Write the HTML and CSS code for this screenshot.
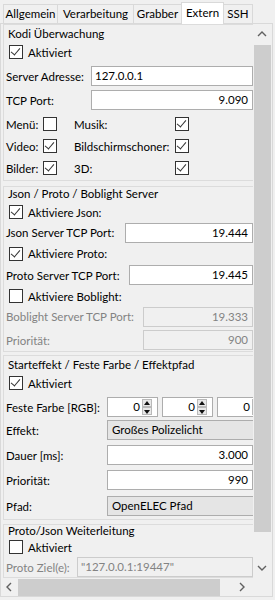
FILE: index.html
```html
<!DOCTYPE html>
<html lang="de">
<head>
    <meta charset="UTF-8">
    <title>Extern</title>
    <link rel="stylesheet" href="styles.css">
</head>
<body>
    <div class="window">
        <div class="tabs">
            <div class="tab t1">Allgemein</div>
            <div class="tab t2">Verarbeitung</div>
            <div class="tab t3">Grabber</div>
            <div class="tab t4 active">Extern</div>
            <div class="tab t5">SSH</div>
        </div>

        <div class="pane">
            <div class="viewport">
                <div class="content">

                    <!-- Kodi -->
                    <div class="group g-kodi">
                        <div class="title">Kodi Überwachung</div>
                        <div class="row check-row h20">
                            <span class="cb checked"></span><span>Aktiviert</span>
                        </div>
                        <div class="row field-row h24 mt2">
                            <label class="lbl w-kodi">Server Adresse:</label>
                            <div class="input left">127.0.0.1</div>
                        </div>
                        <div class="row field-row h24">
                            <label class="lbl w-kodi">TCP Port:</label>
                            <div class="input">9.090</div>
                        </div>
                        <div class="flags mt1">
                            <span>Menü:</span><span class="cb"></span><span>Musik:</span><span class="cb checked"></span>
                            <span>Video:</span><span class="cb checked"></span><span>Bildschirmschoner:</span><span class="cb checked"></span>
                            <span>Bilder:</span><span class="cb checked"></span><span>3D:</span><span class="cb checked"></span>
                        </div>
                    </div>

                    <!-- Json / Proto / Boblight -->
                    <div class="group g-json">
                        <div class="title t-json">Json / Proto / Boblight Server</div>
                        <div class="row check-row h20">
                            <span class="cb checked"></span><span>Aktiviere Json:</span>
                        </div>
                        <div class="row field-row h21">
                            <label class="lbl w-json">Json Server TCP Port:</label>
                            <div class="input">19.444</div>
                        </div>
                        <div class="row check-row h21">
                            <span class="cb checked"></span><span>Aktiviere Proto:</span>
                        </div>
                        <div class="row field-row h22">
                            <label class="lbl w-proto">Proto Server TCP Port:</label>
                            <div class="input">19.445</div>
                        </div>
                        <div class="row check-row h20">
                            <span class="cb"></span><span>Aktiviere Boblight:</span>
                        </div>
                        <div class="row field-row h21">
                            <label class="lbl w-bob disabled">Boblight Server TCP Port:</label>
                            <div class="input off">19.333</div>
                        </div>
                        <div class="row field-row h22 mt2">
                            <label class="lbl w-bob disabled">Priorität:</label>
                            <div class="input off">900</div>
                        </div>
                    </div>

                    <!-- Starteffekt -->
                    <div class="group g-start">
                        <div class="title">Starteffekt / Feste Farbe / Effektpfad</div>
                        <div class="row check-row h20">
                            <span class="cb checked"></span><span>Aktiviert</span>
                        </div>
                        <div class="row field-row h22 mt3">
                            <label class="lbl w-start">Feste Farbe [RGB]:</label>
                            <div class="spins">
                                <div class="spin"><span class="val">0</span><span class="arrows"><i class="up"></i><i class="down"></i></span></div>
                                <div class="spin"><span class="val">0</span><span class="arrows"><i class="up"></i><i class="down"></i></span></div>
                                <div class="spin"><span class="val">0</span><span class="arrows"><i class="up"></i><i class="down"></i></span></div>
                            </div>
                        </div>
                        <div class="row field-row h22 mt1">
                            <label class="lbl w-start">Effekt:</label>
                            <div class="combo">Großes Polizelicht</div>
                        </div>
                        <div class="row field-row h22 mt3">
                            <label class="lbl w-start">Dauer [ms]:</label>
                            <div class="input">3.000</div>
                        </div>
                        <div class="row field-row h22 mt3">
                            <label class="lbl w-start">Priorität:</label>
                            <div class="input">990</div>
                        </div>
                        <div class="row field-row h22 mt4">
                            <label class="lbl w-start">Pfad:</label>
                            <div class="combo">OpenELEC Pfad</div>
                        </div>
                    </div>

                    <!-- Weiterleitung -->
                    <div class="group g-fwd">
                        <div class="title t-fwd">Proto/Json Weiterleitung</div>
                        <div class="row check-row h20">
                            <span class="cb"></span><span>Aktiviert</span>
                        </div>
                        <div class="row field-row h20">
                            <label class="lbl w-fwd disabled">Proto Ziel(e):</label>
                            <div class="input left off">"127.0.0.1:19447"</div>
                        </div>
                    </div>

                </div>
            </div>

            <div class="vbar">
                <svg class="arrow" width="10" height="6" viewBox="0 0 10 6"><polyline points="1,5 5,1 9,5" /></svg>
                <div class="vthumb"></div>
                <svg class="arrow down" width="10" height="6" viewBox="0 0 10 6"><polyline points="1,1 5,5 9,1" /></svg>
            </div>

            <div class="hbar">
                <svg class="harrow" width="6" height="10" viewBox="0 0 6 10"><polyline points="5,1 1,5 5,9" /></svg>
                <div class="hthumb"></div>
                <svg class="harrow right" width="6" height="10" viewBox="0 0 6 10"><polyline points="1,1 5,5 1,9" /></svg>
            </div>

            <div class="corner"></div>
        </div>
    </div>
</body>
</html>
```

FILE: styles.css
```css
body {
    margin: 0;
    background-color: #f0f0f0;
    font-family: Lato, "Noto Sans", sans-serif;
    font-size: 11.5px;
    color: #000;
}
.window {
    width: 275px;
    height: 600px;
    overflow: hidden;
    white-space: nowrap;
}

/* tab bar */
.tabs {
    display: flex;
    align-items: flex-end;
    height: 23px;
    padding-left: 3px;
}
.tab {
    box-sizing: border-box;
    height: 19px;
    line-height: 17px;
    text-align: center;
    border: 1px solid #d9d9d9;
    border-bottom: none;
    margin-right: -1px;
    background-color: #f0f0f0;
}
.t1 { width: 55px; }
.t2 { width: 77px; }
.t3 { width: 49px; }
.t4 { width: 43px; }
.t5 { width: 30px; }
.tab.active {
    height: 22px;
    line-height: 19px;
    background-color: #fff;
    position: relative;
    z-index: 1;
    margin-bottom: -1px;
}

/* tab pane with scroll area */
.pane {
    width: 271px;
    height: 572px;
    border: 1px solid #d9d9d9;
    display: grid;
    grid-template-columns: 252px 18px;
    grid-template-rows: 554px 18px;
}
.viewport {
    overflow: hidden;
}
.content {
    width: 251px;
    padding-left: 2px;
}

.group {
    border: 1px solid #dcdcdc;
    padding-left: 1px;
}
.g-kodi {
    padding-bottom: 1px;
}
.g-json {
    margin-top: 5px;
}
.g-start {
    margin-top: 3px;
    padding-bottom: 2px;
}
.g-fwd {
    margin-top: 4px;
}
.title {
    height: 17px;
    line-height: 17px;
    padding-left: 3px;
}
.t-json {
    height: 15px;
    line-height: 14px;
}
.t-fwd {
    height: 12px;
    line-height: 11px;
}

.row {
    display: flex;
    align-items: center;
}
.h20 { height: 20px; }
.h21 { height: 21px; }
.h22 { height: 22px; }
.h24 { height: 24px; }
.mt1 { margin-top: 1px; }
.mt2 { margin-top: 2px; }
.mt3 { margin-top: 3px; }
.mt4 { margin-top: 4px; }

.check-row {
    padding-left: 4px;
    gap: 5px;
}
.lbl {
    flex: none;
    padding-left: 1px;
}
.lbl.disabled {
    color: #838383;
}
.w-kodi { width: 85px; }
.w-json { width: 119px; }
.w-proto { width: 123px; }
.w-bob { width: 137px; }
.w-start { width: 101px; }
.w-fwd { width: 71px; }

/* checkbox */
.cb {
    box-sizing: border-box;
    width: 14px;
    height: 14px;
    border: 1px solid #333;
    background-color: #fff;
    position: relative;
}
.cb.checked::after {
    content: "";
    position: absolute;
    left: 3px;
    top: 0px;
    width: 4px;
    height: 8px;
    border: solid #333;
    border-width: 0 1px 1px 0;
    transform: rotate(40deg);
}

/* inputs */
.input,
.combo {
    box-sizing: border-box;
    flex: 1;
    min-width: 0;
    height: 20px;
    line-height: 18px;
    border: 1px solid #adadad;
    background-color: #fff;
    text-align: right;
    padding: 0 4px 0 3px;
    overflow: hidden;
}
.input.left {
    text-align: left;
}
.input.off {
    background-color: #f0f0f0;
    border-color: #cccccc;
    color: #838383;
}
.combo {
    flex: none;
    width: 160px;
    text-align: left;
    background-color: #e5e5e5;
    padding-left: 4px;
}

.flags {
    display: grid;
    grid-template-columns: 37px 31px 101px 14px;
    grid-auto-rows: 22px;
    align-items: center;
    padding-left: 1px;
}

/* spin boxes */
.spins {
    display: flex;
    gap: 4px;
}
.spin {
    box-sizing: border-box;
    width: 51px;
    height: 20px;
    border: 1px solid #adadad;
    background-color: #fff;
    display: flex;
    flex: none;
}
.spin .val {
    flex: 1;
    text-align: right;
    line-height: 18px;
    padding-right: 2px;
}
.arrows {
    width: 10px;
    display: flex;
    flex-direction: column;
    margin: 1px 5px 1px 0;
}
.arrows i {
    flex: 1;
    border: 1px solid #b9b9b9;
    background-color: #e8e8e8;
    position: relative;
}
.arrows i::after {
    content: "";
    position: absolute;
    left: 1px;
    width: 0;
    height: 0;
    border-left: 3px solid transparent;
    border-right: 3px solid transparent;
}
.arrows .up::after {
    top: 1px;
    border-bottom: 4px solid #111;
}
.arrows .down::after {
    top: 2px;
    border-top: 4px solid #111;
}

/* scroll bars */
.vbar,
.hbar,
.corner {
    background-color: #f0f0f0;
}
.vbar {
    display: flex;
    flex-direction: column;
    align-items: center;
}
.vbar svg,
.hbar svg {
    fill: none;
    stroke: #606060;
    stroke-width: 1.4;
}
.arrow {
    margin: 7px 0 8px;
}
.arrow.down {
    margin: auto 0 7px;
}
.vthumb {
    width: 17px;
    height: 487px;
    background-color: #cdcdcd;
}
.hbar {
    display: flex;
    align-items: center;
}
.harrow {
    margin: 0 6px 0 5px;
}
.hthumb {
    width: 202px;
    height: 17px;
    background-color: #cdcdcd;
}
.harrow.right {
    margin: 0 8px 0 auto;
}
```
